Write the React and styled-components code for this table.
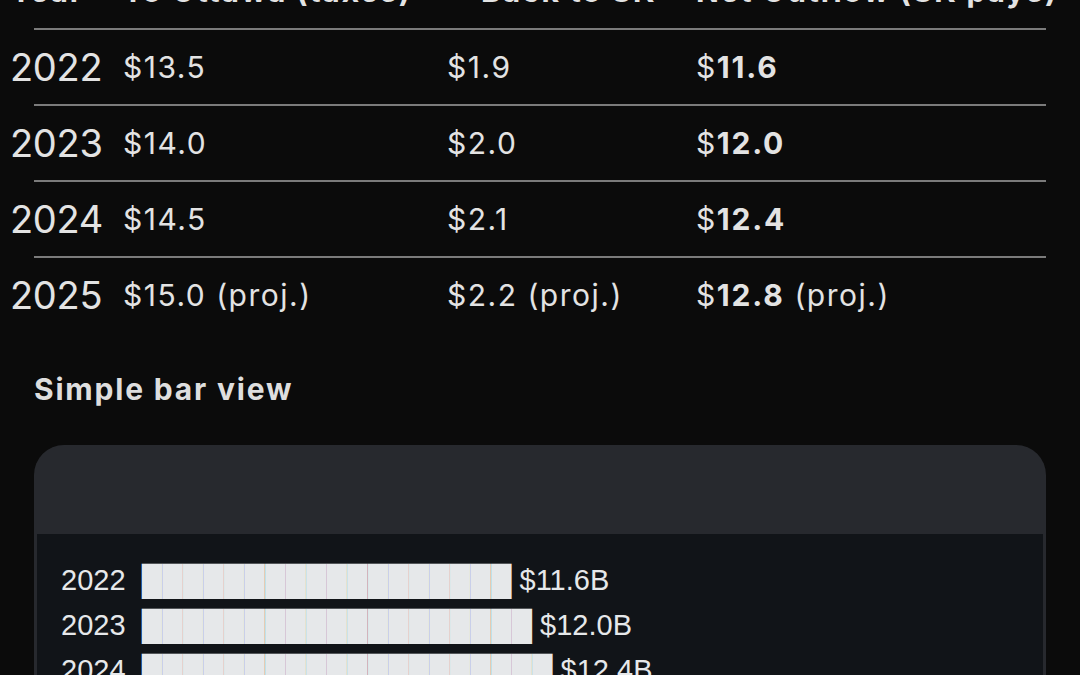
import React from "react";
import { createGlobalStyle, styled } from "styled-components";

const GlobalStyle = createGlobalStyle`
  body {
    margin: 0;
    background: #0b0b0b;
    color: #e3e3e3;
    font-family: Inter, "Liberation Sans", sans-serif;
    overflow: hidden;
  }
`;

const Page = styled.main`
  padding: 0 34px;
  margin-top: -46px;
`;

const TableRow = styled.div`
  display: grid;
  grid-template-columns: 113px 324px 249px 1fr;
  align-items: center;
  height: 74px;
  margin: 0 -24px;
  font-size: 30px;
  letter-spacing: 1.5px;
  white-space: nowrap;
`;

const HeadCell = styled.div`
  font-weight: 700;
  letter-spacing: 1.85px;
  padding-left: ${(p) => p.$indent || 0}px;
`;

const YearCell = styled.div`
  font-size: 38px;
  letter-spacing: -0.3px;
`;

const Cell = styled.div``;

const Strong = styled.b`
  font-weight: 700;
  letter-spacing: 1.8px;
`;

const Divider = styled.hr`
  margin: 0;
  border: 0;
  height: 2px;
  background: #7b7b7b;
`;

const Heading = styled.h3`
  margin: 39px 0 0;
  font-size: 30px;
  font-weight: 700;
  letter-spacing: 1.8px;
  line-height: 36px;
  color: #dedede;
`;

const CodeCard = styled.section`
  margin-top: 38px;
  background: #27292e;
  border-radius: 30px 30px 0 0;
  padding: 0 3px;
`;

const CodeHeader = styled.div`
  height: 89px;
`;

const CodeBody = styled.pre`
  margin: 0;
  padding: 24px 24px;
  background: #111418;
  color: #e6e8ea;
  font-family: "Liberation Sans", sans-serif;
  font-size: 29px;
  line-height: 45px;
`;

const rows = [
  { year: 2022, ottawa: "$13.5", back: "$1.9", net: "11.6" },
  { year: 2023, ottawa: "$14.0", back: "$2.0", net: "12.0" },
  { year: 2024, ottawa: "$14.5", back: "$2.1", net: "12.4" },
  { year: 2025, ottawa: "$15.0", back: "$2.2", net: "12.8", proj: true },
];

const bars = [
  { year: 2022, blocks: 18, value: "$11.6B" },
  { year: 2023, blocks: 19, value: "$12.0B" },
  { year: 2024, blocks: 20, value: "$12.4B" },
  { year: 2025, blocks: 21, value: "$12.8B" },
];

const proj = (on) => (on ? " (proj.)" : "");

export default function App() {
  const chart = bars
    .map((b) => `${b.year}  ${"█".repeat(b.blocks)} ${b.value}`)
    .join("\n");

  return (
    <>
      <GlobalStyle />
      <Page>
        <TableRow>
          <HeadCell>Year</HeadCell>
          <HeadCell>To Ottawa (taxes)</HeadCell>
          <HeadCell $indent={34}>Back to SK</HeadCell>
          <HeadCell>Net Outflow (SK pays)</HeadCell>
        </TableRow>
        {rows.map((r) => (
          <React.Fragment key={r.year}>
            <Divider />
            <TableRow>
              <YearCell>{r.year}</YearCell>
              <Cell>{r.ottawa}{proj(r.proj)}</Cell>
              <Cell>{r.back}{proj(r.proj)}</Cell>
              <Cell>
                $<Strong>{r.net}</Strong>{proj(r.proj)}
              </Cell>
            </TableRow>
          </React.Fragment>
        ))}
        <Heading>Simple bar view</Heading>
        <CodeCard>
          <CodeHeader />
          <CodeBody>{chart}</CodeBody>
        </CodeCard>
      </Page>
    </>
  );
}
